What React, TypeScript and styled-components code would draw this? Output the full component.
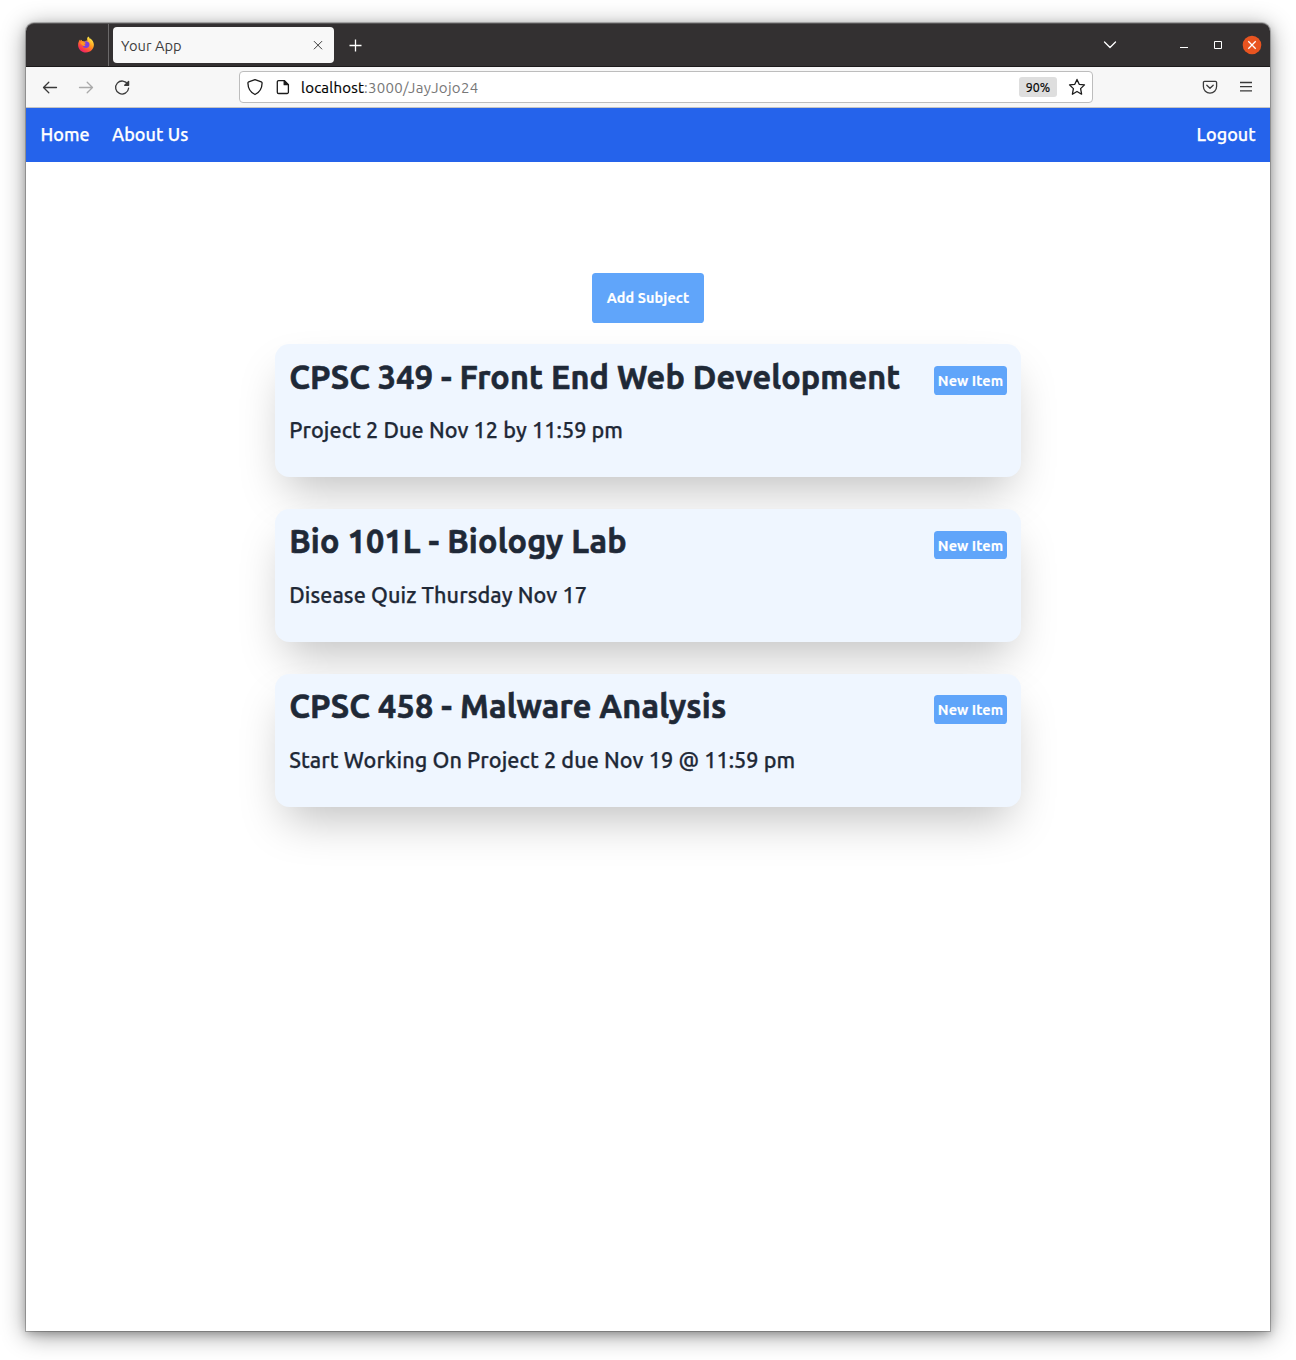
import React from "react";
import styled, { createGlobalStyle } from "styled-components";

const GlobalStyle = createGlobalStyle`
  * { box-sizing: border-box; }
  html, body { margin: 0; padding: 0; background: #fff; }
  body { font-family: Ubuntu, "Noto Sans", "Open Sans", sans-serif; overflow: hidden; }
  button, a { font: inherit; }
`;

const Desktop = styled.div`
  width: 1296px;
  height: 1360px;
  padding: 23px 26px 29px;
  background: #fff;
`;

const BrowserWindow = styled.div`
  display: flex;
  flex-direction: column;
  width: 1244px;
  height: 1308px;
  border-radius: 8px 8px 0 0;
  background: #fff;
  box-shadow: 0 0 0 1px rgba(0, 0, 0, 0.22), 0 3px 8px rgba(0, 0, 0, 0.22),
    0 4px 25px rgba(0, 0, 0, 0.42);
`;

const Label = styled.span<{ $track?: number }>`
  white-space: pre;
  letter-spacing: ${(p) => p.$track ?? 0}px;
`;

const TitleBar = styled.header`
  display: flex;
  flex: none;
  height: 44px;
  align-items: stretch;
  background: #333031;
  border-top: 1px solid #555354;
  border-bottom: 1px solid #1c1a1b;
  border-radius: 8px 8px 0 0;
`;

const PinnedArea = styled.div`
  display: flex;
  width: 83px;
  padding-left: 52px;
  padding-bottom: 1px;
  align-items: center;
  border-right: 1px solid #6b696a;
`;

const Tab = styled.div`
  display: flex;
  width: 221px;
  height: 36px;
  margin: 3px 0 0 4px;
  padding: 1px 9px 0 8px;
  align-items: center;
  justify-content: space-between;
  border-radius: 4px;
  background: #f8f8f8;
  color: #3d3d3d;
  font-size: 14.67px;
`;

const NewTab = styled.div`
  display: flex;
  width: 43px;
  align-items: center;
  justify-content: center;
  color: #fff;
`;

const WindowControls = styled.div`
  display: flex;
  margin-left: auto;
  padding-right: 1px;
  align-items: center;
  color: #fff;
`;

const Control = styled.div<{ $gapAfter?: number }>`
  display: flex;
  width: 34px;
  height: 20px;
  margin-right: ${(p) => p.$gapAfter ?? 0}px;
  align-items: center;
  justify-content: center;
`;

const Toolbar = styled.div`
  display: flex;
  flex: none;
  height: 41px;
  padding: 0 14px;
  align-items: center;
  justify-content: space-between;
  background: #f7f7f7;
  border-bottom: 1px solid #c4c4c4;
  color: #3a3a3a;
`;

const ToolGroup = styled.div<{ $w: number; $end?: boolean }>`
  display: flex;
  width: ${(p) => p.$w}px;
  gap: 16px;
  justify-content: ${(p) => (p.$end ? "flex-end" : "flex-start")};
`;

const Icon = styled.svg<{ $dim?: boolean; $thin?: boolean; $square?: boolean }>`
  display: block;
  flex: none;
  fill: none;
  stroke: currentColor;
  stroke-width: ${(p) => (p.$thin ? 1 : 1.3)};
  stroke-linecap: ${(p) => (p.$square ? "butt" : "round")};
  stroke-linejoin: ${(p) => (p.$square ? "miter" : "round")};
  opacity: ${(p) => (p.$dim ? 0.4 : 1)};
`;

const AddressBar = styled.div`
  display: flex;
  width: 854px;
  height: 32px;
  padding: 0 6px;
  align-items: center;
  border: 1px solid #bdbdbd;
  border-radius: 4px;
  background: #fff;
  color: #1b1b1b;
`;

const Url = styled.div`
  display: flex;
  flex: 1;
  margin-left: 9px;
  padding-top: 1px;
  color: #777;
  font-size: 15px;
`;

const Host = styled(Label)`
  color: #000;
  -webkit-text-stroke: 0.2px;
`;

const SiteIcons = styled.div`
  display: flex;
  gap: 10px;
`;

const ZoomBadge = styled.div`
  display: flex;
  width: 38px;
  height: 20px;
  margin-right: 11px;
  align-items: center;
  justify-content: center;
  border-radius: 3px;
  background: #dedede;
  color: #000;
  font-size: 12.4px;
  -webkit-text-stroke: 0.2px;
`;

const Nav = styled.nav`
  display: flex;
  flex: none;
  height: 54px;
  padding: 0 14.4px 2px;
  align-items: center;
  background: #2563eb;
  color: #fff;
  font-size: 18px;
  font-weight: 500;
  -webkit-text-stroke: 0.25px;
`;

const NavLink = styled.a<{ $w?: number }>`
  width: ${(p) => (p.$w ? p.$w + "px" : "auto")};
  margin-left: ${(p) => (p.$w ? 0 : "auto")};
`;

const Main = styled.main`
  display: flex;
  flex: 1;
  flex-direction: column;
  padding-top: 111px;
  align-items: center;
`;

const AddButton = styled.button`
  width: 112px;
  height: 50px;
  padding: 0;
  border: 0;
  border-radius: 3.6px;
  background: #60a5fa;
  color: #fff;
  font-size: 14.4px;
  font-weight: 700;
  -webkit-text-stroke: 0.15px;
`;

const SubjectList = styled.section`
  display: flex;
  width: 746px;
  margin-top: 21.25px;
  flex-direction: column;
  gap: 31.8px;
`;

const Card = styled.article`
  height: 133px;
  padding: 13.35px 14px 0 14.2px;
  border-radius: 14.4px;
  background: #eff6ff;
  color: #1f2937;
  box-shadow: 0 22.5px 45px -10.8px rgba(0, 0, 0, 0.25);
`;

const CardHeader = styled.div`
  display: flex;
  height: 38px;
  justify-content: space-between;
`;

const CardTitle = styled.h1`
  margin: 0;
  font-size: 32.4px;
  font-weight: 700;
  line-height: 38px;
  -webkit-text-stroke: 0.6px;
`;

const NewItemButton = styled.button`
  width: 73px;
  height: 28.8px;
  margin-top: 8.25px;
  padding: 1.3px 0 0;
  border: 0;
  border-radius: 3.6px;
  background: #60a5fa;
  color: #fff;
  font-size: 14.4px;
  font-weight: 700;
  -webkit-text-stroke: 0.15px;
`;

const CardItem = styled.p`
  margin: 18.65px 0 0;
  font-size: 21.6px;
  font-weight: 500;
  line-height: 32px;
  -webkit-text-stroke: 0.25px;
`;

const subjects = [
  { title: "CPSC 349 - Front End Web Development", titleTrack: 0.14, item: "Project 2 Due Nov 12 by 11:59 pm" },
  { title: "Bio 101L - Biology Lab", titleTrack: 0.16, item: "Disease Quiz Thursday Nov 17" },
  { title: "CPSC 458 - Malware Analysis", titleTrack: 0.18, item: "Start Working On Project 2 due Nov 19 @ 11:59 pm" },
];

function FirefoxLogo() {
  return (
    <svg width="16" height="17" viewBox="0 0 16 17">
      <defs>
        <linearGradient id="flame" x1="0.85" y1="0.1" x2="0.25" y2="1">
          <stop offset="0" stopColor="#fff04a" />
          <stop offset="0.4" stopColor="#ff9a1f" />
          <stop offset="0.72" stopColor="#ff4a3d" />
          <stop offset="1" stopColor="#e81a6d" />
        </linearGradient>
      </defs>
      <path
        d="M10.2.4c1 .8 1.6 1.8 1.8 2.8 0-.3 0-.7-.1-1 2.400 1.300 4 4 4 6.600 0 4.300-3.500 7.700-7.900 7.700S.1 13.200.1 8.900C.1 6.800.9 5 2.100 3.600l.4 1.100c.5-.5.8-.7 1.300-1l.2 1.300c.9-.2 1.800 0 2.600.4.9-.6 2-.9 3-.8C8.700 3.200 9.100 1.500 10.200.4Z"
        fill="url(#flame)"
      />
      <path d="M5.400 6.200c1.500-1.500 4.600-1.300 5.700.8 1.200 2.200-.3 4.800-2.900 5-1.900.1-3.500-1.100-3.700-2.800 1 .7 2.400.6 3.100-.4-1-.2-1.500-.6-1.400-1.300.2-.5.800-.7 1.500-.8-.6-.5-1.500-.7-2.300-.5Z" fill="#7b3fe0" />
      <path d="M2.200 6.800c.8-.9 2.500-1 3.600-.2.800.2 1.600.2 2 .5-.3.700-1.600.8-1.800 1.300-.1.500.6.900 1.400 1-1.200 1-2.900.5-3.300-.3-.5-.900-1.400-1.300-1.900-2.300Z" fill="#ff9922" />
    </svg>
  );
}

export default function App() {
  return (
    <Desktop>
      <GlobalStyle />
      <BrowserWindow>
        <TitleBar>
          <PinnedArea>
            <FirefoxLogo />
          </PinnedArea>
          <Tab>
            <Label $track={0.04}>Your App</Label>
            <Icon width="14" height="14" viewBox="0 0 14 14" $thin>
              <path d="M3.200 2.400l7.600 7.600M10.800 2.400l-7.600 7.600" />
            </Icon>
          </Tab>
          <NewTab>
            <Icon width="13" height="13" viewBox="0 0 13 13" $square>
              <path d="M6.500 .5v12M.5 6.500h12" />
            </Icon>
          </NewTab>
          <WindowControls>
            <Control $gapAfter={40}>
              <Icon width="14" height="14" viewBox="0 0 14 14">
                <path d="M1.500 4l5.500 5.500L12.500 4" />
              </Icon>
            </Control>
            <Control>
              <Icon width="8" height="8" viewBox="0 0 8 8" $thin $square>
                <path d="M0 6.500h8" />
              </Icon>
            </Control>
            <Control>
              <Icon width="8" height="8" viewBox="0 0 8 8" $thin $square>
                <path d="M.5.5h7v7h-7z" />
              </Icon>
            </Control>
            <Control>
              <svg width="20" height="20" viewBox="0 0 20 20">
                <circle cx="10" cy="10" r="9.300" fill="#e95420" />
                <path d="M6.300 6.300l7.400 7.400M13.700 6.300l-7.400 7.400" stroke="#fff" strokeWidth="1.300" />
              </svg>
            </Control>
          </WindowControls>
        </TitleBar>

        <Toolbar>
          <ToolGroup $w={199}>
            <Icon width="20" height="20" viewBox="0 0 20 20">
              <path d="M16.500 10.500h-13M8.800 5.300l-5.300 5.200 5.300 5.200" />
            </Icon>
            <Icon width="20" height="20" viewBox="0 0 20 20" $dim>
              <path d="M3.500 10.500h13M11.200 5.300l5.300 5.200-5.300 5.200" />
            </Icon>
            <Icon width="20" height="20" viewBox="0 0 20 20">
              <path d="M15.800 7.300a6.500 6.500 0 1 0 .8 3.900" />
              <path d="M16.600 4.400v3.900h-3.900z" fill="currentColor" />
            </Icon>
          </ToolGroup>
          <AddressBar>
            <SiteIcons>
              <Icon width="18" height="18" viewBox="0 0 18 18">
                <path d="M9 1.600l6.300 2.200c.6.200.8.600.8 1.200-.1 4.800-2.300 9.300-7.100 11.500C4.200 14.300 2 9.800 1.900 5c0-.600.2-1 .8-1.200z" />
              </Icon>
              <Icon width="18" height="18" viewBox="0 0 18 18">
                <path d="M4.600 2.600h5.800l4 4v7.600a1.300 1.300 0 0 1-1.300 1.300H4.600a1.300 1.300 0 0 1-1.300-1.300V3.900a1.300 1.300 0 0 1 1.300-1.300z" />
                <path d="M10.200 2.800v3.900h4z" fill="currentColor" />
              </Icon>
            </SiteIcons>
            <Url>
              <Host $track={0.22}>localhost</Host>
              <Label $track={0.3}>:3000/JayJojo24</Label>
            </Url>
            <ZoomBadge>
              <Label>90%</Label>
            </ZoomBadge>
            <Icon width="18" height="18" viewBox="0 0 18 18">
              <path d="M9 1.400l2.200 4.900 5.300.6-3.900 3.700 1 5.600L9 13.500l-4.600 2.700 1-5.600L1.500 6.900l5.300-.6z" />
            </Icon>
          </AddressBar>
          <ToolGroup $w={163} $end>
            <Icon width="20" height="20" viewBox="0 0 20 20">
              <path d="M4.600 4.400h10.800a1.200 1.200 0 0 1 1.200 1.200v4a6.600 6.600 0 0 1-13.200 0v-4a1.200 1.200 0 0 1 1.200-1.200z" />
              <path d="M6.800 8.200l3.200 3.100 3.200-3.100" />
            </Icon>
            <Icon width="20" height="20" viewBox="0 0 20 20" $square>
              <path d="M4 5.500h12M4 9.700h12M4 13.900h12" />
            </Icon>
          </ToolGroup>
        </Toolbar>

        <Nav>
          <NavLink $w={71.6}>
            <Label $track={0.08}>Home</Label>
          </NavLink>
          <NavLink $w={90}>
            <Label $track={0.06}>About Us</Label>
          </NavLink>
          <NavLink>
            <Label $track={0}>Logout</Label>
          </NavLink>
        </Nav>

        <Main>
          <AddButton>
            <Label $track={0.12}>Add Subject</Label>
          </AddButton>
          <SubjectList>
            {subjects.map((s) => (
              <Card key={s.title}>
                <CardHeader>
                  <CardTitle>
                    <Label $track={s.titleTrack}>{s.title}</Label>
                  </CardTitle>
                  <NewItemButton>
                    <Label $track={0.08}>New Item</Label>
                  </NewItemButton>
                </CardHeader>
                <CardItem>
                  <Label $track={0.08}>{s.item}</Label>
                </CardItem>
              </Card>
            ))}
          </SubjectList>
        </Main>
      </BrowserWindow>
    </Desktop>
  );
}
